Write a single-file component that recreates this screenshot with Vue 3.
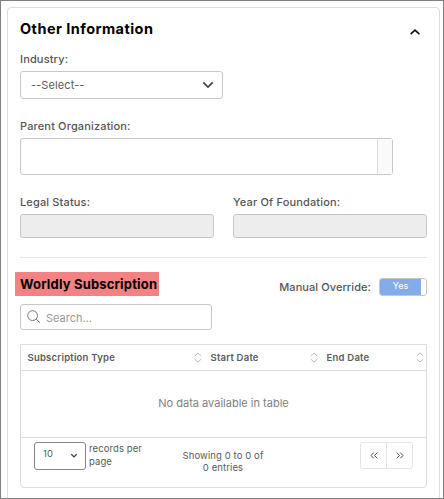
<template>
  <div class="page">
    <section class="panel">
      <header class="panel-header">
        <h2 class="panel-title">Other Information</h2>
        <button class="collapse" aria-label="Collapse">
          <svg width="12" height="8" viewBox="0 0 12 8">
            <path d="M1.6 6.2L6 2.2L10.4 6.2" />
          </svg>
        </button>
      </header>

      <div class="field">
        <label>Industry:</label>
        <div class="control select">
          <span>{{ industry }}</span>
          <svg width="12" height="8" viewBox="0 0 12 8">
            <path d="M1.3 1.4L6 6L10.7 1.4" />
          </svg>
        </div>
      </div>

      <div class="field parent">
        <label>Parent Organization:</label>
        <div class="control lookup">
          <span class="lookup-addon"></span>
        </div>
      </div>

      <div class="field-row">
        <div v-for="name in readonlyFields" :key="name" class="field">
          <label>{{ name }}</label>
          <div class="control disabled"></div>
        </div>
      </div>

      <!-- Subscription -->
      <div class="subscription">
        <div class="sub-header">
          <h3 class="sub-title">Worldly Subscription</h3>
          <div class="override">
            <label>Manual Override:</label>
            <button class="switch" @click="override = !override">
              <span>{{ override ? "Yes" : "No" }}</span>
            </button>
          </div>
        </div>

        <div class="control search">
          <svg width="14" height="14" viewBox="0 0 14 14">
            <circle cx="5.6" cy="5.6" r="4.9" />
            <path d="M9.2 9.2L13 12.8" />
          </svg>
          <input v-model="query" placeholder="Search..." />
        </div>

        <div class="table">
          <div class="table-head">
            <div v-for="col in columns" :key="col" class="th">
              <span>{{ col }}</span>
              <svg width="8" height="11" viewBox="0 0 8 11">
                <path d="M0.8 3.9L4 0.9L7.2 3.9M0.8 7.1L4 10.1L7.2 7.1" />
              </svg>
            </div>
          </div>
          <div class="table-empty">No data available in table</div>
          <div class="table-footer">
            <div class="page-size">
              <span>10</span>
              <svg width="8" height="6" viewBox="0 0 8 6">
                <path d="M1.3 1.3L4 3.9L6.7 1.3" />
              </svg>
            </div>
            <div class="records">records per page</div>
            <div class="info">Showing 0 to 0 of 0 entries</div>
            <div class="pager">
              <button aria-label="First">
                <svg width="8" height="7" viewBox="0 0 8 7">
                  <path d="M3.8 0.6L1 3.5L3.8 6.4M7.3 0.6L4.5 3.5L7.3 6.4" />
                </svg>
              </button>
              <button aria-label="Last">
                <svg width="8" height="7" viewBox="0 0 8 7">
                  <path d="M0.7 0.6L3.5 3.5L0.7 6.4M4.2 0.6L7 3.5L4.2 6.4" />
                </svg>
              </button>
            </div>
          </div>
        </div>
      </div>
    </section>
  </div>
</template>

<script setup>
import { ref } from "vue";

const industry = ref("--Select--");
const override = ref(true);
const query = ref("");

const readonlyFields = ["Legal Status:", "Year Of Foundation:"];
const columns = ["Subscription Type", "Start Date", "End Date"];
</script>

<style>
body {
  margin: 0;
  background: #fff;
}
</style>

<style scoped>
* {
  box-sizing: border-box;
}
.page {
  width: 444px;
  height: 499px;
  padding: 6px 3px 0 6px;
  border: 1px solid #808080;
  overflow: hidden;
  background: #fff;
  font-family: Inter, "Liberation Sans", sans-serif;
  color: #5a5a5a;
}
.panel {
  height: 520px;
  padding: 0 12px;
  border: 1px solid #dcdcdc;
  border-radius: 4px;
}
svg {
  display: block;
  flex-shrink: 0;
  fill: none;
  stroke: #444;
}
button {
  padding: 0;
  border: 0;
  background: none;
  font: inherit;
}

.panel-header {
  display: flex;
  justify-content: space-between;
  align-items: center;
  height: 42px;
}
.panel-title,
.sub-title {
  margin: 0;
  font-weight: 700;
  color: #000;
  white-space: nowrap;
}
.panel-title {
  margin-top: -1px;
  font-size: 14.5px;
  letter-spacing: 0.45px;
}
.collapse {
  margin: 6px 6px 0 0;
}
.collapse svg {
  stroke: #111;
  stroke-width: 1.6;
}

label {
  display: block;
  height: 21px;
  font-size: 11px;
  font-weight: 500;
  line-height: 18px;
  letter-spacing: 0.15px;
  color: #555;
}
.control {
  border: 1px solid #c8c8c8;
  border-radius: 3px;
  background: #fff;
}
.select {
  display: flex;
  justify-content: space-between;
  align-items: center;
  width: 203px;
  height: 28px;
  padding: 0 8px 0 10px;
  font-size: 11px;
  letter-spacing: 0.1px;
}
.select svg {
  stroke-width: 1.7;
}
.parent {
  margin-top: 18px;
}
.lookup {
  display: flex;
  justify-content: flex-end;
  width: 373px;
  height: 37px;
}
.lookup-addon {
  width: 15px;
  border-left: 1px solid #ddd;
  background: #fafafa;
}
.field-row {
  display: grid;
  grid-template-columns: 1fr 1fr;
  gap: 19px;
  margin-top: 18px;
}
.disabled {
  height: 24px;
  background: #ededed;
}

.subscription {
  margin-top: 19px;
  border-top: 1px solid #e6e6e6;
}
.sub-header {
  display: flex;
  justify-content: space-between;
  height: 24px;
  margin: 14px 0 8px -5px;
}
.sub-title {
  width: 144px;
  padding-left: 5px;
  background: #f48282;
  font-size: 13px;
  line-height: 24px;
  letter-spacing: 0.17px;
}
.override {
  display: flex;
  gap: 8px;
  margin-top: 6px;
}
.override label {
  letter-spacing: 0.07px;
}
.switch {
  width: 48px;
  height: 18px;
  overflow: hidden;
  border: 1px solid #c8c8c8;
  border-radius: 3px;
  background: #fff;
}
.switch span {
  display: block;
  width: 41px;
  height: 16px;
  background: #82ade9;
  color: #fff;
  font-size: 9px;
  line-height: 14px;
  text-align: center;
}

.search {
  display: flex;
  align-items: center;
  width: 192px;
  height: 26px;
  padding-left: 6px;
}
.search svg {
  stroke: #666;
  stroke-width: 0.9;
}
.search input {
  width: 150px;
  margin: 2px 0 0 5px;
  padding: 0;
  border: 0;
  outline: 0;
  background: none;
  font: inherit;
  font-size: 11px;
}
.search input::placeholder {
  color: #999;
}

.table {
  margin-top: 14px;
  border: 1px solid #dcdcdc;
  border-radius: 0 0 4px 4px;
}
.table-head {
  display: grid;
  grid-template-columns: 183px 116px 1fr;
  height: 26px;
  border-bottom: 1px solid #dcdcdc;
}
.th {
  display: flex;
  justify-content: space-between;
  align-items: center;
  padding: 0 2px 0 6.5px;
  font-size: 9.5px;
  font-weight: 600;
  letter-spacing: 0.23px;
}
.th span {
  margin-top: -1px;
}
.th svg {
  stroke: #b5b5b5;
}
.table-empty {
  height: 67px;
  border-bottom: 1px solid #dcdcdc;
  font-size: 11px;
  line-height: 65px;
  text-align: center;
  color: #808080;
}
.table-footer {
  display: flex;
  height: 49px;
  padding: 4px 13px 0;
  font-size: 9.5px;
  letter-spacing: 0.1px;
}
.page-size {
  display: flex;
  justify-content: space-between;
  width: 52px;
  height: 28px;
  padding: 0 7px 0 8px;
  border: 1px solid #858585;
  border-radius: 3px;
  line-height: 22px;
}
.page-size svg {
  margin-top: 10px;
  stroke-width: 1.4;
}
.records {
  width: 56px;
  margin-left: 3px;
  line-height: 13px;
}
.info {
  width: 84px;
  margin: 8px 0 0 36px;
  line-height: 12px;
  text-align: center;
}
.pager {
  display: flex;
  width: 53px;
  height: 27px;
  margin-left: auto;
  border: 1px solid #e4e4e4;
  border-radius: 3px;
}
.pager button {
  display: flex;
  flex: 1;
  justify-content: center;
  align-items: center;
}
.pager button + button {
  border-left: 1px solid #e4e4e4;
}
</style>
